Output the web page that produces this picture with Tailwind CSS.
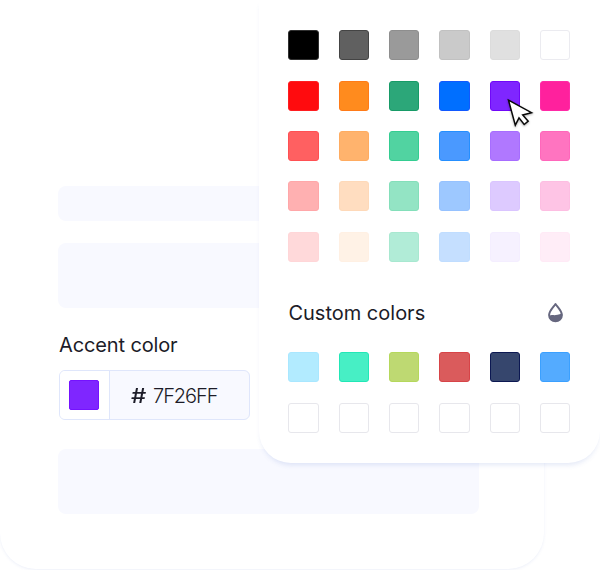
<!DOCTYPE html>
<html lang="en">
<head>
<meta charset="utf-8">
<title>Accent color</title>
<script src="https://cdn.jsdelivr.net/npm/@tailwindcss/browser@4"></script>
</head>
<body class="relative h-[570px] w-[600px] overflow-hidden bg-white font-['Inter',sans-serif] text-[#1c1c28]">
  <main class="h-[569px] w-[544px] rounded-b-[36px] bg-white pl-[58px] pt-[186px] shadow-[0_1px_3px_rgba(90,120,200,0.11)]">
    <div class="h-[35px] w-[421px] rounded-lg bg-[#f8f9ff]"></div>
    <div class="mt-[22px] h-[65px] w-[421px] rounded-lg bg-[#f8f9ff]"></div>
    <h2 class="mt-[22px] h-[30px] whitespace-nowrap pl-px text-[20px] leading-[30px] tracking-[-0.13px]">Accent color</h2>
    <div class="ml-px mt-[10px] flex h-[50px] w-[191px] overflow-hidden rounded-[6px] border border-[#dfe6fb] bg-[#f8f9ff]">
      <div class="flex w-[50px] items-center border-r border-[#dfe6fb] bg-white pl-[9px]">
        <div class="size-[30px] rounded-[2px] border border-[#7512ff] bg-[#7f26ff]"></div>
      </div>
      <div class="flex items-center gap-[5px] pl-[21px] pt-px text-[20px]"><span class="w-[17px] origin-left scale-x-[1.2] font-medium">#</span><span class="font-light tracking-[-1.05px]">7F26FF</span></div>
    </div>
    <div class="mt-[29px] h-[65px] w-[421px] rounded-lg bg-[#f8f9ff]"></div>
  </main>

  <aside class="absolute left-[259px] top-0 h-[463px] w-[341px] rounded-b-[32px] bg-white pl-[29.4px] pt-[30.2px] shadow-[0_4px_5px_-2px_rgba(80,115,200,0.16)]">
    <div class="grid grid-cols-[repeat(6,30.2px)] auto-rows-[30.2px] gap-[20.15px] *:rounded-[3px] *:border">
      <i class="border-[#303030] bg-black"></i><i class="border-[#444] bg-[#606060]"></i><i class="border-[#8e8e8e] bg-[#9a9a9a]"></i><i class="border-[#c1c1c1] bg-[#cacaca]"></i><i class="border-[#dcdcdc] bg-[#e0e0e0]"></i><i class="border-[#ebebf0] bg-white"></i>
      <i class="border-[#ff1d20] bg-[#ff0b0e]"></i><i class="border-[#ff7b18] bg-[#ff8b1e]"></i><i class="border-[#179b67] bg-[#2ca779]"></i><i class="border-[#1159ff] bg-[#006fff]"></i><i class="border-[#7008f8] bg-[#7f26ff]"></i><i class="border-[#ff2aa6] bg-[#ff219d]"></i>
      <i class="border-[#ff5053] bg-[#ff6061]"></i><i class="border-[#ffac61] bg-[#ffb36d]"></i><i class="border-[#34cd91] bg-[#51d3a1]"></i><i class="border-[#258fff] bg-[#4a99ff]"></i><i class="border-[#a76dff] bg-[#b078ff]"></i><i class="border-[#ff67bb] bg-[#ff74c0]"></i>
      <i class="border-[#ffa7a9] bg-[#ffb0b1]"></i><i class="border-[#fed9b9] bg-[#ffddc0]"></i><i class="border-[#84dfba] bg-[#93e4c4]"></i><i class="border-[#96c2ff] bg-[#9dc8ff]"></i><i class="border-[#dac5ff] bg-[#ddcaff]"></i><i class="border-[#fdbee2] bg-[#fec4e5]"></i>
      <i class="border-[#ffd6d8] bg-[#ffd9da]"></i><i class="border-[#fff0e3] bg-[#fff2e6]"></i><i class="border-[#a8e8d0] bg-[#b1ecd7]"></i><i class="border-[#c0ddff] bg-[#c5dfff]"></i><i class="border-[#f4eeff] bg-[#f6f1ff]"></i><i class="border-[#ffeaf6] bg-[#ffedf7]"></i>
    </div>
    <div class="mt-[36px] flex h-[30px] w-[281px] items-center justify-between whitespace-nowrap text-[20px] leading-[30px]">
      <h2>Custom colors</h2>
      <svg class="mr-[5px] h-[22px] w-[17px] -translate-y-px" viewBox="0 0 17 22" fill="none">
        <path d="M8.5 3C6.8 5.6 2.1 9.7 2.1 14.1C2.1 17.8 5 20.2 8.5 20.2S14.9 17.8 14.9 14.1C14.9 9.7 10.2 5.6 8.5 3Z" fill="white" stroke="#66677f" stroke-width="2" stroke-linejoin="round"/>
        <path d="M2 15C5.4 12.9 8 15.7 14.9 12.3C15.9 17.5 12.4 20.2 8.5 20.2S1.6 17.5 2 15Z" fill="#66677f"/>
      </svg>
    </div>
    <div class="mt-[24.4px] grid grid-cols-[repeat(6,30.2px)] auto-rows-[30.2px] gap-x-[20.15px] gap-y-[20.5px] *:rounded-[3px] *:border">
      <i class="border-[#a9e7ff] bg-[#b2ebff]"></i><i class="border-[#22e7b6] bg-[#47efc5]"></i><i class="border-[#b5d85c] bg-[#bed972]"></i><i class="border-[#d74448] bg-[#da5b5c]"></i><i class="border-[#0c1852] bg-[#36466d]"></i><i class="border-[#3ba0ff] bg-[#54abff]"></i>
      <i class="border-[#e7e7ec]"></i><i class="border-[#e7e7ec]"></i><i class="border-[#e7e7ec]"></i><i class="border-[#e7e7ec]"></i><i class="border-[#e7e7ec]"></i><i class="border-[#e7e7ec]"></i>
    </div>
  </aside>

  <svg class="absolute left-[504px] top-[96px] h-[36px] w-[34px] drop-shadow-[0_1px_1px_rgba(0,0,0,0.3)]" viewBox="0 0 34 36">
    <path d="M4.5 4.2L27.5 16.7L18.7 18.9L24.2 25.2L20.2 28.5L15 21.8L11.3 29.2Z" fill="white" stroke="#090909" stroke-width="1.5"/>
  </svg>
</body>
</html>
